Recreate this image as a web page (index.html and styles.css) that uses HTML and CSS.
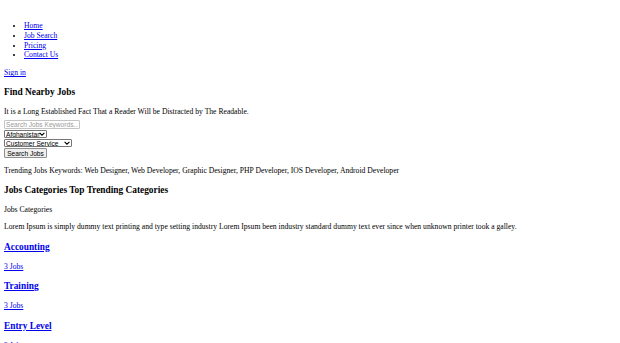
FILE: index.html
```html
<!DOCTYPE html>
<html lang="en">
<head>
    <meta charset="UTF-8">
    <meta name="viewport" content="width=device-width, initial-scale=1.0">
    <title>Find Nearby Jobs</title>
    <link rel="stylesheet" href="styles.css">
</head>
<body>
    <header class="site-header">
        <div class="logo"></div>
        <ul class="nav-menu">
            <li><a href="#">Home</a></li>
            <li><a href="#">Job Search</a></li>
            <li><a href="#">Pricing</a></li>
            <li><a href="#">Contact Us</a></li>
        </ul>
        <a href="#" class="sign-in">Sign in</a>
    </header>

    <section class="search-banner">
        <h3>Find Nearby Jobs</h3>
        <div class="banner-text">It is a Long Established Fact That a Reader Will be Distracted by The Readable.</div>
        <form class="search-form">
            <input type="text" class="keyword-input" placeholder="Search Jobs Keywords...">
            <select class="country-select">
                <option>Afghanistan</option>
                <option>Albania</option>
                <option>Algeria</option>
            </select>
            <select class="category-select">
                <option>Customer Service</option>
                <option>Accounting</option>
                <option>Training</option>
            </select>
            <button type="submit" class="search-btn">Search Jobs</button>
        </form>
        <p class="trending">Trending Jobs Keywords: Web Designer, Web Developer, Graphic Designer, PHP Developer, IOS Developer, Android Developer</p>
    </section>

    <section class="categories">
        <h3>Jobs Categories <span>Top Trending Categories</span></h3>
        <p>Jobs Categories</p>
        <p class="intro">Lorem Ipsum is simply dummy text printing and type setting industry Lorem Ipsum been industry standard dummy text ever since when unknown printer took a galley.</p>

        <div class="category-item">
            <h3><a href="#">Accounting</a></h3>
            <p><a href="#">3 Jobs</a></p>
        </div>
        <div class="category-item">
            <h3><a href="#">Training</a></h3>
            <p><a href="#">3 Jobs</a></p>
        </div>
        <div class="category-item">
            <h3><a href="#">Entry Level</a></h3>
            <p><a href="#">3 Jobs</a></p>
        </div>
    </section>
</body>
</html>
```

FILE: styles.css
```css
/* plain page, everything at half size */
body {
    margin: 4px;
    font-family: "Liberation Serif", "Times New Roman", serif;
    font-size: 7.65px;
    line-height: 9.2px;
    color: #000;
}
a {
    color: #0000ee;
}
.logo {
    height: 9px;
}
.nav-menu {
    margin: 8px 0;
    padding-left: 20px;
}
.nav-menu li {
    line-height: 9.8px;
}
h3 {
    font-size: 9.36px;
    line-height: 10.8px;
    margin: 9.36px 0;
}
.category-item h3 {
    margin-top: 10.4px;
}
p {
    margin: 8px 0;
}
.search-form {
    margin: 0;
    padding-top: 3.4px;
    display: flex;
    flex-direction: column;
    align-items: flex-start;
    gap: 1px;
}
.search-form input,
.search-form select,
.search-form button {
    font-family: "Liberation Sans", Arial, sans-serif;
    font-size: 6.6px;
    line-height: 7px;
    margin: 0;
    box-sizing: border-box;
}
.keyword-input {
    width: 76px;
    height: 9.5px;
    padding: 0 1px;
    border: 1px solid #c4c4c4;
    border-radius: 1px;
}
.keyword-input::placeholder {
    color: #9a9a9a;
}
.country-select,
.category-select {
    -webkit-appearance: none;
    appearance: none;
    height: 8px;
    padding: 0 6px 0 1px;
    border: 1px solid #767676;
    border-radius: 1px;
    color: #000;
    background: #fff url("data:image/svg+xml,%3Csvg xmlns='http://www.w3.org/2000/svg' width='6' height='4' viewBox='0 0 6 4'%3E%3Cpath d='M0.6 0.8 L3 3.2 L5.4 0.8' fill='none' stroke='%23000' stroke-width='1.1'/%3E%3C/svg%3E") no-repeat right 1.5px center;
}
.country-select {
    width: 43px;
}
.category-select {
    width: 68px;
}
.search-btn {
    height: 10px;
    width: 43px;
    padding: 0 2px;
    border: 1px solid #8f8f8f;
    border-radius: 1px;
    background: #efefef;
    color: #000;
}
```
